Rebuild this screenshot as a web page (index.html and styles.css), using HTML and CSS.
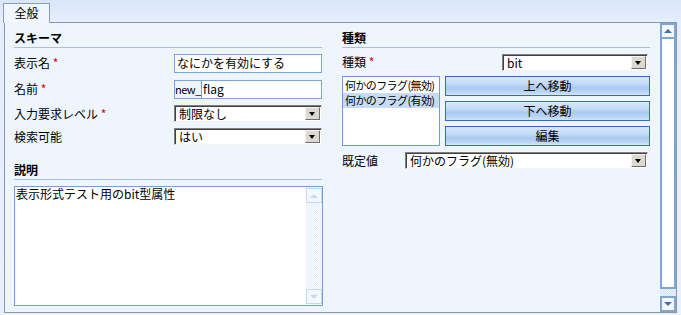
FILE: index.html
```html
<!DOCTYPE html>
<html lang="ja">
<head>
    <meta charset="UTF-8">
    <title>フィールドのプロパティ</title>
    <link rel="stylesheet" href="styles.css">
</head>
<body>
    <div class="tabs">
        <div class="tab">全般</div>
    </div>

    <div class="panel">
        <!-- 左: スキーマと説明 -->
        <div class="column">
            <div class="section-title">スキーマ</div>
            <div class="row row-display">
                <span class="label">表示名 <span class="req">*</span></span>
                <div class="textbox wide">なにかを有効にする</div>
            </div>
            <div class="row row-name">
                <span class="label">名前 <span class="req">*</span></span>
                <div class="prefixed">
                    <span class="prefix">new_</span>
                    <span class="textbox rest">flag</span>
                </div>
            </div>
            <div class="row row-level">
                <span class="label">入力要求レベル <span class="req">*</span></span>
                <div class="select left-select">制限なし<span class="drop"></span></div>
            </div>
            <div class="row row-search">
                <span class="label">検索可能</span>
                <div class="select left-select">はい<span class="drop"></span></div>
            </div>

            <div class="section-title desc-title">説明</div>
            <div class="memo">
                <div class="memo-text">表示形式テスト用のbit型属性</div>
                <div class="mini-scroll">
                    <div class="mini-btn"><span class="tri-up pale"></span></div>
                    <div class="mini-track"></div>
                    <div class="mini-btn"><span class="tri-down pale"></span></div>
                </div>
            </div>
        </div>

        <!-- 右: 種類 -->
        <div class="column">
            <div class="section-title">種類</div>
            <div class="row row-type">
                <span class="label type-label">種類 <span class="req">*</span></span>
                <div class="select type-select">bit<span class="drop"></span></div>
            </div>
            <div class="options">
                <div class="listbox">
                    <div class="option">何かのフラグ(無効)</div>
                    <div class="option selected">何かのフラグ(有効)</div>
                </div>
                <div class="option-buttons">
                    <div class="btn">上へ移動</div>
                    <div class="btn">下へ移動</div>
                    <div class="btn">編集</div>
                </div>
            </div>
            <div class="row row-default">
                <span class="label default-label">既定値</span>
                <div class="select default-select">何かのフラグ(無効)<span class="drop"></span></div>
            </div>
        </div>

        <div class="scrollbar">
            <div class="sb-btn"><span class="tri-up"></span></div>
            <div class="sb-track"></div>
            <div class="sb-gap"></div>
            <div class="sb-btn"><span class="tri-down"></span></div>
        </div>
    </div>
</body>
</html>
```

FILE: styles.css
```css
body {
    margin: 0;
    font-family: "Noto Sans CJK JP", "DejaVu Sans", sans-serif;
    font-size: 12px;
    color: #000;
    background: linear-gradient(#d8e6fa, #e4eefc 22px, #e9f1fd);
    width: 681px;
    height: 315px;
    overflow: hidden;
}

.tabs {
    height: 22px;
    display: flex;
    align-items: flex-end;
    padding-left: 3px;
}

.tab {
    position: relative;
    z-index: 2;
    width: 45px;
    height: 19px;
    margin-bottom: -1px;
    border: 1px solid #8d9bb0;
    border-bottom: none;
    background: #f1f6fe;
    text-align: center;
    line-height: 18px;
}

.panel {
    margin: 0 4px 0 4px;
    height: 289px;
    border: 1px solid #8a97aa;
    background: #eef5fd;
    display: flex;
    padding-left: 9px;
}

.column {
    width: 308px;
    margin-right: 20px;
    display: flex;
    flex-direction: column;
}

.column + .column {
    margin-right: 10px;
}

.section-title {
    font-weight: bold;
    line-height: 14px;
    padding-top: 8px;
    padding-bottom: 2px;
    border-bottom: 1px solid #a6bfe2;
}

.desc-title {
    margin-top: 10px;
}

.row {
    display: flex;
    align-items: center;
}

.label {
    width: 160px;
    flex: none;
    line-height: 14px;
}

.req {
    color: #e00000;
}

.row-display { margin-top: 5px; height: 20px; }
.row-name { margin-top: 6px; height: 20px; }
.row-level { margin-top: 6px; height: 17px; }
.row-search { margin-top: 6px; height: 17px; }

.row-type { margin-top: 5px; height: 18px; }
.row-default { margin-top: 6px; height: 17px; }

.type-label { width: 160px; }
.default-label { width: 63px; }

.textbox {
    display: block;
    box-sizing: border-box;
    height: 19px;
    border: 1px solid #7ba4dc;
    background: #fff;
    padding-left: 2px;
    line-height: 16px;
}

.wide {
    width: 148px;
}

.prefixed {
    display: flex;
    width: 148px;
}

.prefix {
    box-sizing: border-box;
    width: 27px;
    height: 19px;
    border: 1px solid #7ba4dc;
    border-right: none;
    line-height: 16px;
    font-size: 11px;
    letter-spacing: -0.5px;
    overflow: hidden;
    white-space: nowrap;
}

.rest {
    flex: 1;
    padding-left: 1px;
}

.select {
    position: relative;
    box-sizing: border-box;
    height: 17px;
    border-top: 1px solid #808080;
    border-left: 1px solid #808080;
    border-right: 1px solid #f4f3ef;
    border-bottom: 1px solid #f4f3ef;
    box-shadow: inset 1px 1px 0 #404040;
    background: #fff;
    padding-left: 4px;
    line-height: 15px;
}

.left-select { width: 148px; }
.type-select { width: 146px; }
.default-select { width: 243px; }

.drop {
    position: absolute;
    right: 1px;
    top: 1px;
    width: 15px;
    height: 13px;
    box-sizing: border-box;
    background: #dcd9d2;
    border-top: 1px solid #f4f3ef;
    border-left: 1px solid #f4f3ef;
    border-right: 1px solid #6f6f6f;
    border-bottom: 1px solid #6f6f6f;
}

.drop::after {
    content: "";
    position: absolute;
    left: 3px;
    top: 4px;
    border-left: 3.5px solid transparent;
    border-right: 3.5px solid transparent;
    border-top: 4px solid #000;
}

.memo {
    margin-top: 6px;
    box-sizing: border-box;
    width: 309px;
    height: 120px;
    border: 1px solid #73a0da;
    background: #fff;
    display: flex;
}

.memo-text {
    flex: 1;
    line-height: 14px;
    padding-left: 1px;
}

.mini-scroll {
    width: 16px;
    display: flex;
    flex-direction: column;
    padding: 1px 0;
    background: repeating-conic-gradient(#e6effa 0 25%, #f8fbff 0 50%) 0 0 / 2px 2px;
}

.mini-btn {
    box-sizing: border-box;
    height: 15px;
    border: 1px solid #c4d8f1;
    background: #f3f8fe;
    display: flex;
    align-items: center;
    justify-content: center;
}

.mini-track {
    flex: 1;
}

.tri-up {
    border-left: 4px solid transparent;
    border-right: 4px solid transparent;
    border-bottom: 4px solid #4c6f9f;
}

.tri-down {
    border-left: 4px solid transparent;
    border-right: 4px solid transparent;
    border-top: 4px solid #4c6f9f;
}

.tri-up.pale {
    border-bottom-color: #c9d9ee;
}

.tri-down.pale {
    border-top-color: #c9d9ee;
}

.options {
    margin-top: 5px;
    display: flex;
    height: 70px;
}

.listbox {
    box-sizing: border-box;
    width: 98px;
    height: 70px;
    border: 1px solid #6d9ad8;
    background: #fff;
    padding-top: 1px;
    overflow: hidden;
}

.option {
    height: 15px;
    line-height: 15px;
    padding-left: 2px;
    white-space: nowrap;
    font-size: 11px;
    letter-spacing: -0.6px;
}

.option.selected {
    background: #c6dbf6;
}

.option-buttons {
    margin-left: 5px;
    flex: 1;
    display: flex;
    flex-direction: column;
    gap: 5px;
}

.btn {
    box-sizing: border-box;
    height: 20px;
    border: 1px solid #3868cf;
    background: linear-gradient(#d9e8fb 0%, #c6dcf7 35%, #aacaf1 60%, #bcd6f5 85%, #d4e5fa 100%);
    text-align: center;
    line-height: 18px;
}

.scrollbar {
    width: 16px;
    display: flex;
    flex-direction: column;
}

.sb-btn {
    box-sizing: border-box;
    height: 16px;
    border: 2px solid #80a6d6;
    background: #f4f8fe;
    display: flex;
    align-items: center;
    justify-content: center;
}

.sb-track {
    flex: 1;
    box-sizing: border-box;
    border: 2px solid #80a6d6;
    border-top: none;
    background: #fff;
}

.sb-gap {
    height: 7px;
    background: repeating-conic-gradient(#d3e1f3 0 25%, #f1f6fd 0 50%) 0 0 / 2px 2px;
}
```
